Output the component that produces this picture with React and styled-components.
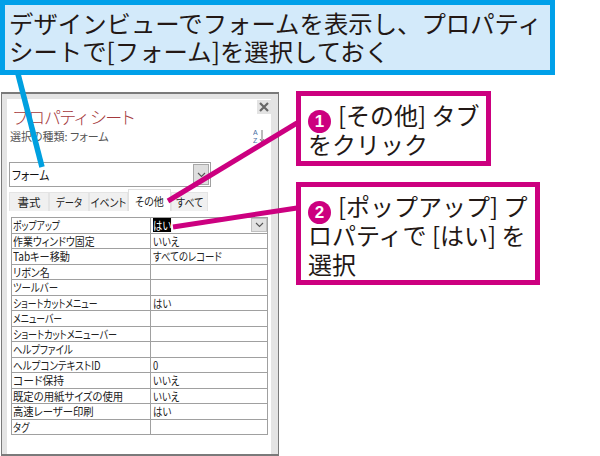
import React from 'react';
import styled, { createGlobalStyle } from 'styled-components';

const GlobalStyle = createGlobalStyle`
  html, body {
    margin: 0;
    padding: 0;
    background: #fff;
  }
  body {
    font-family: "Noto Sans CJK JP", "Noto Sans", sans-serif;
  }
`;

// name, squeeze of the name, value, selected
const ROWS = [
  ['ポップアップ', 0.77, 'はい', true],
  ['作業ウィンドウ固定', 0.86, 'いいえ'],
  ['Tabキー移動', 0.88, 'すべてのレコード'],
  ['リボン名', 0.87, ''],
  ['ツールバー', 0.82, ''],
  ['ショートカットメニュー', 0.77, 'はい'],
  ['メニューバー', 0.77, ''],
  ['ショートカットメニューバー', 0.79, ''],
  ['ヘルプファイル', 0.82, ''],
  ['ヘルプコンテキストID', 0.83, '0'],
  ['コード保持', 0.94, 'いいえ'],
  ['既定の用紙サイズの使用', 0.9, 'いいえ'],
  ['高速レーザー印刷', 0.9, 'はい'],
  ['タグ', 0.8, ''],
];

const TABS = [
  ['書式', 40, 1],
  ['データ', 40, 0.81],
  ['イベント', 39, 0.87],
  ['その他', 43, 0.87, true],
  ['すべて', 37, 0.87],
];

const Chevron = () => (
  <svg width="9" height="6" viewBox="0 0 9 6">
    <path d="M1 1l3.5 3.5L8 1" fill="none" stroke="#555" strokeWidth="1.1" />
  </svg>
);

export default function App() {
  return (
    <Page>
      <GlobalStyle />
      <Banner>
        デザインビューでフォームを表示し、プロパティ
        <br />
        シートで[フォーム]を選択しておく
      </Banner>
      <Body>
        <Window>
          <CloseButton>
            <svg width="10" height="10" viewBox="0 0 10 10">
              <path d="M1 1l8 8M9 1l-8 8" stroke="#666" strokeWidth="2.2" />
            </svg>
          </CloseButton>
          <Title>プロパティ シート</Title>
          <SubRow>
            <span>選択の種類: フォーム</span>
            <SortIcon>
              <svg width="12" height="15" viewBox="0 0 12 15">
                <text x="0" y="6" fontSize="7" fill="#4a6fa5" fontFamily="Liberation Sans">A</text>
                <text x="0" y="14" fontSize="7" fill="#4a6fa5" fontFamily="Liberation Sans">Z</text>
                <path d="M9 1v11M7 10l2 3 2-3" fill="none" stroke="#777" />
              </svg>
            </SortIcon>
          </SubRow>
          <Select>
            <Squeezed $scale={0.85}>フォーム</Squeezed>
            <SelectButton>
              <Chevron />
            </SelectButton>
          </Select>
          <TabBar>
            {TABS.map(([label, width, scale, active]) => (
              <Tab key={label} $active={active} $width={width}>
                <TabLabel $scale={scale}>{label}</TabLabel>
              </Tab>
            ))}
          </TabBar>
          <Sheet>
            {ROWS.map(([name, scale, value, selected]) => (
              <Row key={name}>
                <NameCell>
                  <Squeezed $scale={scale}>{name}</Squeezed>
                </NameCell>
                <ValueCell>
                  <Squeezed $scale={0.82} $selected={selected}>{value}</Squeezed>
                  {selected && (
                    <RowButton>
                      <Chevron />
                    </RowButton>
                  )}
                </ValueCell>
              </Row>
            ))}
          </Sheet>
        </Window>
        <Notes>
          <Note $width={195} $height={75}>
            <Num>1</Num>[その他] タブ
            <br />
            をクリック
          </Note>
          <Note $width={244} $height={103}>
            <Num>2</Num>[ポップアップ] プ
            <br />
            ロパティで [はい] を
            <br />
            選択
          </Note>
        </Notes>
      </Body>
      <Connectors width="600" height="456" viewBox="0 0 600 456">
        <line x1="18" y1="74" x2="42" y2="167" stroke="#00a0e0" strokeWidth="5.5" />
        <line x1="297" y1="123" x2="168" y2="201" stroke="#cc0080" strokeWidth="5" />
        <line x1="297" y1="208" x2="173" y2="227" stroke="#cc0080" strokeWidth="5" />
      </Connectors>
    </Page>
  );
}

const Page = styled.div`
  position: relative;
  width: 600px;
  height: 456px;
  overflow: hidden;
  background: #fff;
`;

const Banner = styled.div`
  box-sizing: border-box;
  width: 555px;
  height: 75px;
  padding: 4px 0 0 4px;
  border: 5px solid #00a0e9;
  background: #d3eafa;
  color: #231815;
  font-size: 24.4px;
  line-height: 28px;
  white-space: nowrap;
`;

const Body = styled.div`
  display: flex;
  align-items: flex-start;
  gap: 17px;
  padding: 16px 0 0 1px;
`;

const Window = styled.div`
  position: relative;
  box-sizing: border-box;
  flex: none;
  width: 278px;
  height: 364px;
  margin-top: 1px;
  padding: 5px 7px 0 5px;
  border: 1px solid #7a7a7a;
  border-width: 2px 1px 2px 1px;
  background: linear-gradient(#e4e4e4, #e4e4e4) right / 7px 100% no-repeat,
    linear-gradient(#e4e4e4, #e4e4e4) left / 5px 100% no-repeat,
    linear-gradient(#e4e4e4, #e4e4e4) top / 100% 5px no-repeat, #fff;
  color: #222;
  font-size: 11px;
`;

const CloseButton = styled.div`
  position: absolute;
  top: 6px;
  right: 7px;
  display: flex;
  align-items: center;
  justify-content: center;
  width: 14px;
  height: 14px;
  background: #e3e3e3;
`;

const Title = styled.div`
  padding: 7px 0 0 6px;
  color: #a5393d;
  font-size: 17px;
  font-weight: 300;
  font-feature-settings: "palt";
  letter-spacing: -0.4px;
  line-height: 22px;
  white-space: nowrap;
`;

const SubRow = styled.div`
  display: flex;
  justify-content: space-between;
  align-items: flex-start;
  margin-top: 1px;
  padding: 0 6px 0 3px;
  height: 33px;
  color: #555;
  font-size: 11px;
  font-feature-settings: "palt";
  line-height: 14px;
`;

const SortIcon = styled.div`
  line-height: 0;
`;

const Select = styled.div`
  display: flex;
  align-items: center;
  justify-content: space-between;
  box-sizing: border-box;
  width: 202px;
  height: 25px;
  margin-left: 2px;
  padding: 0 1px 0 2px;
  border: 1px solid #a0a0a0;
  background: #fff;
  color: #111;
  font-size: 12.5px;
  font-feature-settings: "palt";
`;

const SelectButton = styled.div`
  display: flex;
  align-items: center;
  justify-content: center;
  width: 16px;
  height: 21px;
  border: 1px solid #a8a8a8;
  box-sizing: border-box;
  background: #dedede;
`;

const TabBar = styled.div`
  display: flex;
  align-items: flex-end;
  height: 24px;
  margin-left: 2px;
`;

const Tab = styled.div`
  display: flex;
  align-items: center;
  justify-content: center;
  box-sizing: border-box;
  width: ${(p) => p.$width}px;
  height: ${(p) => (p.$active ? 22 : 19)}px;
  border: 1px solid ${(p) => (p.$active ? '#e0e0e0' : '#e4e4e4')};
  border-bottom: none;
  background: ${(p) => (p.$active ? '#fff' : '#f0f0f0')};
  color: #222;
  font-size: 11.5px;
  font-feature-settings: "palt";
  white-space: nowrap;
  overflow: hidden;
`;

const TabLabel = styled.span`
  display: inline-block;
  transform: scaleX(${(p) => p.$scale});
`;

const Sheet = styled.div`
  width: 257px;
  margin: 6px 0 0 4px;
  border: solid #a0a0a0;
  border-width: 1px 1px 0 1px;
  box-sizing: border-box;
`;

const Row = styled.div`
  display: grid;
  grid-template-columns: 138px 1fr;
  height: 15.5px;
  box-sizing: border-box;
  border-bottom: 1px solid #a0a0a0;
  font-size: 11.5px;
  font-feature-settings: "palt";
  line-height: 14px;
  color: #222;
`;

const NameCell = styled.div`
  padding-left: 1px;
  white-space: nowrap;
  overflow: hidden;
`;

const ValueCell = styled.div`
  position: relative;
  padding-left: 2px;
  border-left: 1px solid #a0a0a0;
  white-space: nowrap;
`;

// the dialog's UI font has much narrower kana than Noto
const Squeezed = styled.span`
  display: inline-block;
  transform: scaleX(${(p) => p.$scale});
  transform-origin: left center;
  ${(p) => p.$selected && 'background: #000; color: #fff; height: 14px;'}
`;

const RowButton = styled.div`
  position: absolute;
  top: 0;
  right: 0;
  display: flex;
  align-items: center;
  justify-content: center;
  box-sizing: border-box;
  width: 16px;
  height: 14px;
  border: 1px solid #c0c0c0;
  background: #e2e2e2;
`;

const Notes = styled.div`
  display: flex;
  flex-direction: column;
  align-items: flex-start;
  gap: 16px;
`;

const Note = styled.div`
  box-sizing: border-box;
  width: ${(p) => p.$width}px;
  height: ${(p) => p.$height}px;
  padding: 4px 0 0 7px;
  border: 5px solid #cc007f;
  background: #fff;
  color: #231815;
  font-size: 24px;
  line-height: 29px;
  white-space: nowrap;
`;

const Num = styled.span`
  display: inline-block;
  width: 23px;
  height: 23px;
  margin: -6px 7px -6px 0;
  border-radius: 50%;
  background: #cc007f;
  color: #fff;
  font-family: "Liberation Sans", sans-serif;
  font-size: 17px;
  font-weight: 700;
  line-height: 23px;
  text-align: center;
  vertical-align: -2px;
`;

const Connectors = styled.svg`
  position: absolute;
  top: 0;
  left: 0;
  pointer-events: none;
`;
